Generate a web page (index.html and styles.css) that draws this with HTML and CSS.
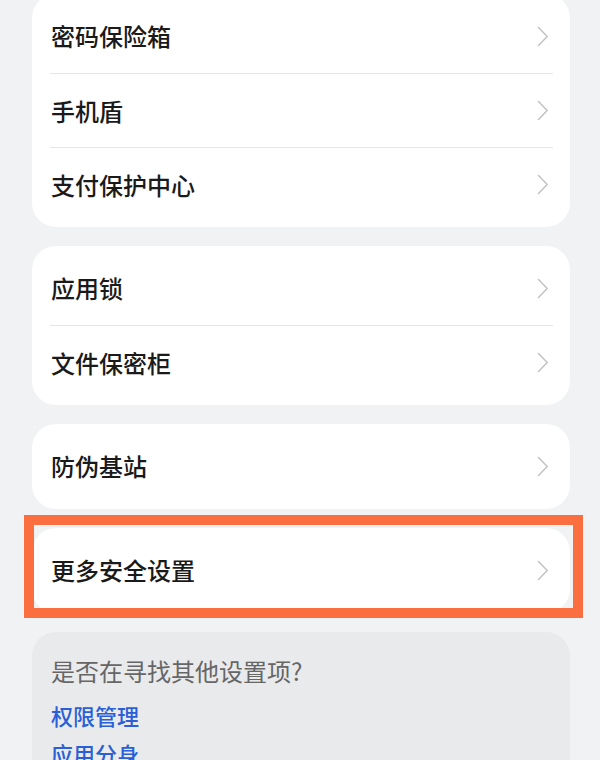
FILE: index.html
```html
<!DOCTYPE html>
<html lang="zh-CN">
<head>
<meta charset="utf-8">
<title>安全设置</title>
<link rel="stylesheet" href="styles.css">
</head>
<body>
<main class="page">
  <section class="card card-first">
    <div class="row"><span class="label">密码保险箱</span><svg class="chev" viewBox="0 0 12 21" width="12" height="21"><path d="M1.5 1.5 L10.2 10.5 L1.5 19.5"/></svg></div>
    <div class="row"><span class="label">手机盾</span><svg class="chev" viewBox="0 0 12 21" width="12" height="21"><path d="M1.5 1.5 L10.2 10.5 L1.5 19.5"/></svg></div>
    <div class="row"><span class="label">支付保护中心</span><svg class="chev" viewBox="0 0 12 21" width="12" height="21"><path d="M1.5 1.5 L10.2 10.5 L1.5 19.5"/></svg></div>
  </section>
  <section class="card">
    <div class="row"><span class="label">应用锁</span><svg class="chev" viewBox="0 0 12 21" width="12" height="21"><path d="M1.5 1.5 L10.2 10.5 L1.5 19.5"/></svg></div>
    <div class="row"><span class="label">文件保密柜</span><svg class="chev" viewBox="0 0 12 21" width="12" height="21"><path d="M1.5 1.5 L10.2 10.5 L1.5 19.5"/></svg></div>
  </section>
  <section class="card">
    <div class="row"><span class="label">防伪基站</span><svg class="chev" viewBox="0 0 12 21" width="12" height="21"><path d="M1.5 1.5 L10.2 10.5 L1.5 19.5"/></svg></div>
  </section>
  <div class="highlight-wrap">
    <section class="card">
      <div class="row"><span class="label">更多安全设置</span><svg class="chev" viewBox="0 0 12 21" width="12" height="21"><path d="M1.5 1.5 L10.2 10.5 L1.5 19.5"/></svg></div>
    </section>
    <div class="highlight"></div>
  </div>
  <section class="card card-suggest">
    <p class="suggest-title">是否在寻找其他设置项?</p>
    <a class="suggest-link" href="#">权限管理</a>
    <a class="suggest-link" href="#">应用分身</a>
  </section>
</main>
</body>
</html>
```
FILE: styles.css
```css
html, body {
  margin: 0;
  padding: 0;
  background: #f1f2f4;
  height: 100%;
  overflow: hidden;
}
body {
  font-family: "Noto Sans CJK SC", "Noto Sans", sans-serif;
  color: #1a1a1a;
}
.page {
  display: flex;
  flex-direction: column;
  gap: 19px;
  padding: 0 30px 0 32px;
}
.card {
  background: #ffffff;
  border-radius: 24px;
  padding: 5px 0 6px;
}
.card-first {
  margin-top: -6px;
}
.row {
  box-sizing: border-box;
  height: 74px;
  margin: 0 17px 0 18px;
  padding: 0 4px 0 1px;
  display: flex;
  align-items: center;
  justify-content: space-between;
}
.row + .row {
  border-top: 1px solid #e6e6e6;
}
.label {
  font-size: 24px;
  font-weight: 500;
  line-height: 30px;
  color: #1a1a1a;
}
.chev {
  display: block;
  flex: none;
}
.chev path {
  fill: none;
  stroke: #c2c2c2;
  stroke-width: 1.5;
  stroke-linecap: round;
  stroke-linejoin: round;
}
.highlight-wrap {
  position: relative;
}
.highlight {
  position: absolute;
  top: -13px;
  left: -8px;
  right: -13px;
  bottom: -5px;
  border: 10px solid #fa6e40;
  pointer-events: none;
}
.card-suggest {
  background: #e9eaec;
  padding: 24px 19px 20px;
  display: flex;
  flex-direction: column;
  align-items: flex-start;
  gap: 8px;
}
.suggest-title {
  margin: 0 0 6px;
  font-size: 24px;
  line-height: 30px;
  color: #666666;
}
.suggest-link {
  font-size: 22px;
  line-height: 30px;
  font-weight: 500;
  color: #2a5fd6;
  text-decoration: none;
}
```
